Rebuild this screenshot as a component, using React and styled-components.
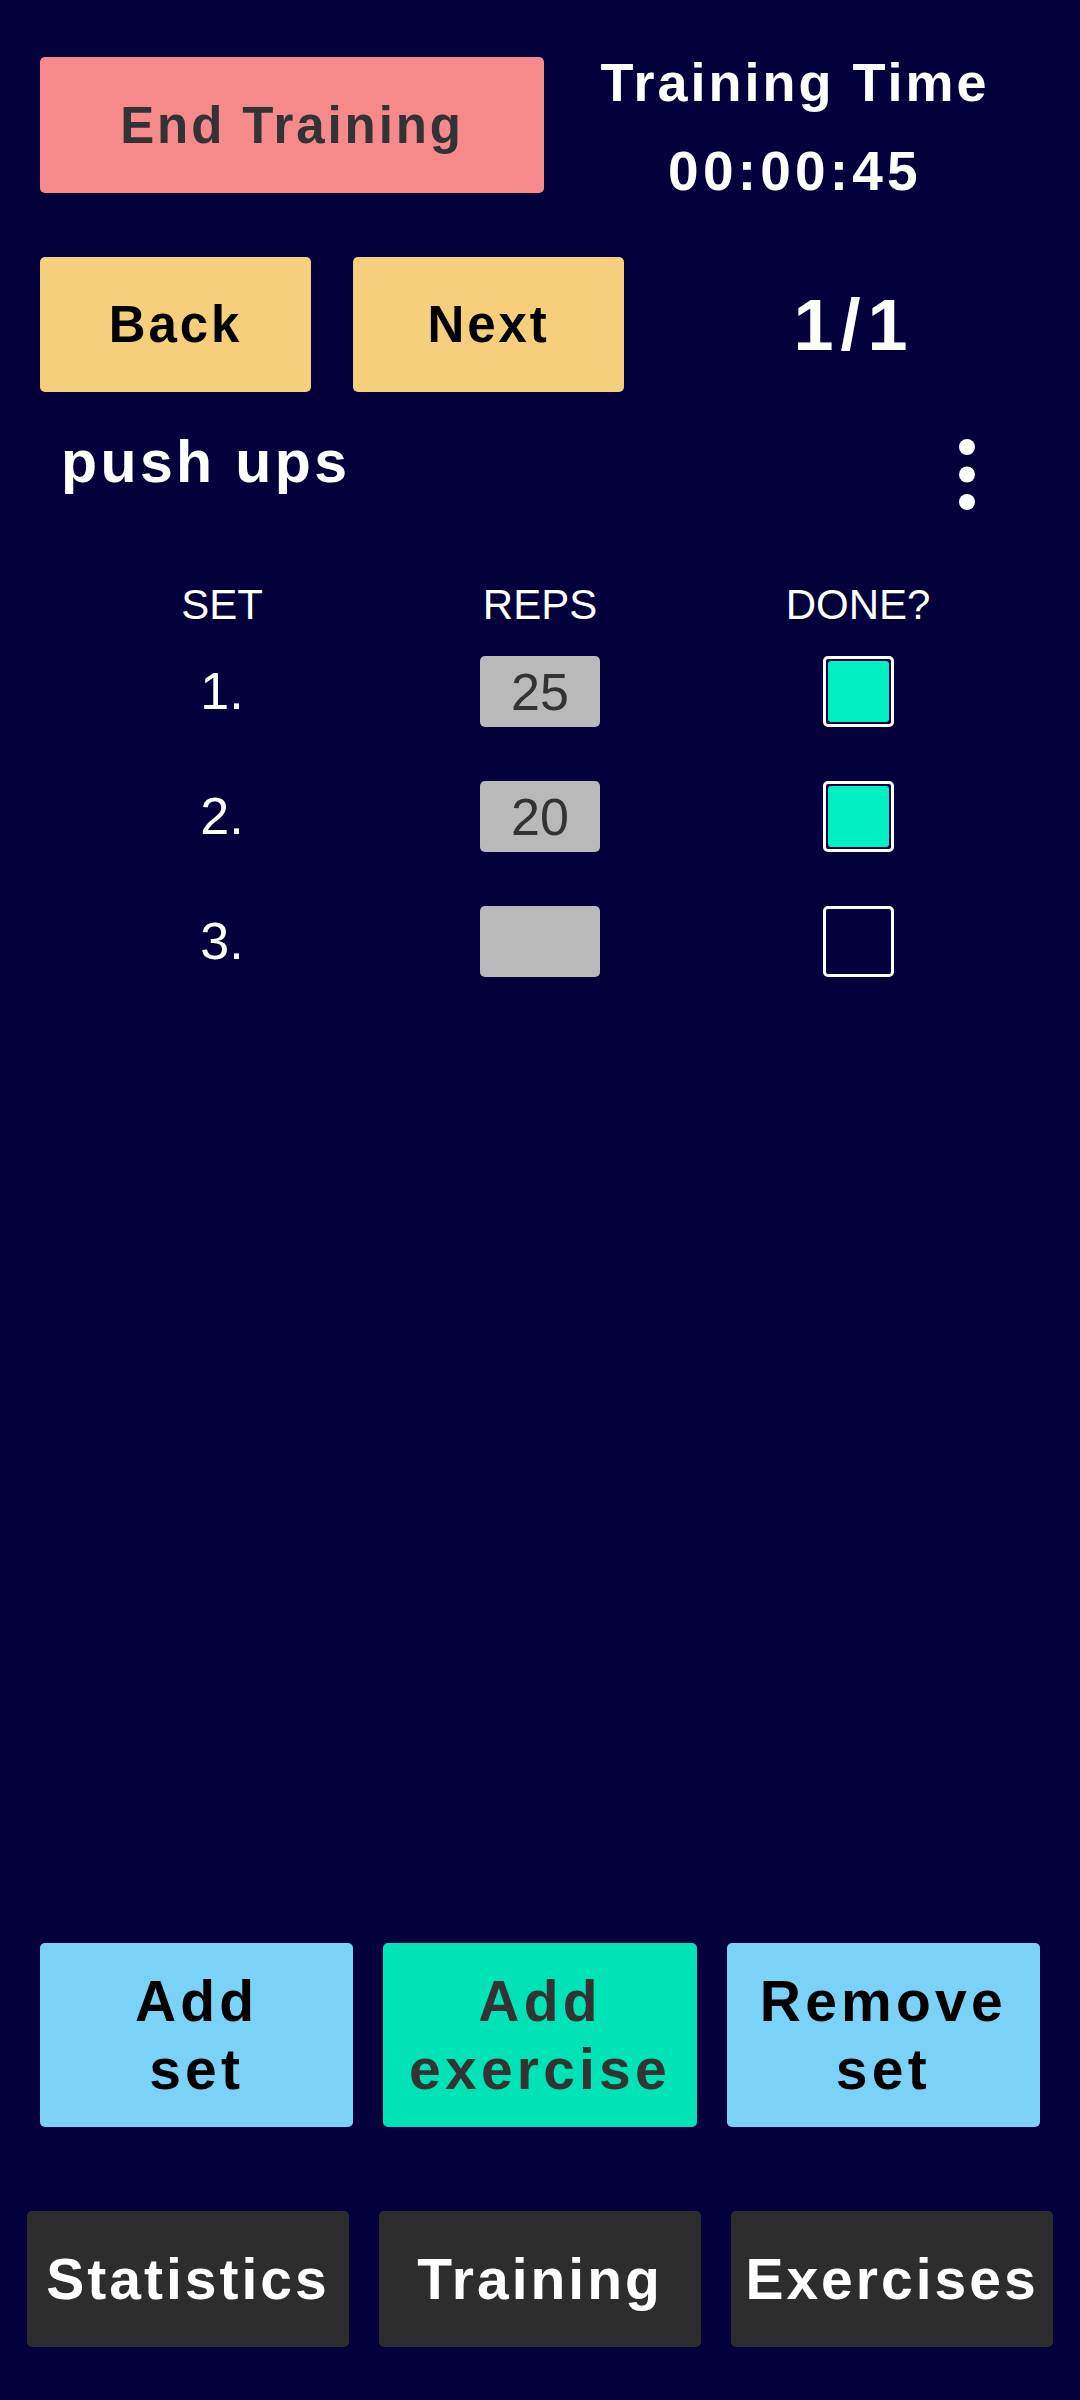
import React, { useState } from "react";
import styled, { createGlobalStyle } from "styled-components";

const GlobalStyle = createGlobalStyle`
	body {
		margin: 0;
		background-color: #03003b;
		font-family: "Liberation Sans", Arial, sans-serif;
	}
`;

const Page = styled.div`
	min-height: 100vh;
	display: flex;
	flex-direction: column;
	background-color: #03003b;
	color: #ffffff;
`;

const Button = styled.button`
	box-sizing: border-box;
	border: none;
	outline: none;
	border-radius: 5px;
	padding: 0;
	cursor: pointer;
	font-family: inherit;
	font-weight: bold;
	background-color: ${(p) => p.$bg};
	color: ${(p) => p.$color || "#000000"};
	font-size: ${(p) => p.$size || 51}px;
	letter-spacing: ${(p) => p.$spacing || 2.9}px;
	line-height: ${(p) => p.$lineHeight || "normal"};
`;

const TopRow = styled.div`
	display: flex;
	align-items: flex-start;
	height: 136px;
	padding: 57px 34px 0 40px;
`;

const EndButton = styled(Button)`
	width: 504px;
	height: 136px;
`;

const TimerBlock = styled.div`
	flex: 1;
	display: flex;
	flex-direction: column;
	align-items: center;
	gap: 27px;
	margin-top: -6px;
	font-weight: bold;
`;

const TimerTitle = styled.div`
	font-size: 54px;
	line-height: 62px;
	letter-spacing: 3px;
`;

const TimerValue = styled.div`
	font-size: 55px;
	line-height: 62px;
	letter-spacing: 4.2px;
`;

const PagerRow = styled.div`
	display: flex;
	align-items: center;
	gap: 42px;
	padding: 64px 38px 0 40px;
`;

const PagerButton = styled(Button)`
	width: 271px;
	height: 135px;
`;

const PageCount = styled.div`
	flex: 1;
	text-align: center;
	font-size: 72px;
	font-weight: bold;
	letter-spacing: 7px;
`;

const ExerciseRow = styled.div`
	display: flex;
	justify-content: space-between;
	align-items: flex-start;
	padding: 38px 105px 0 61px;
`;

const ExerciseName = styled.div`
	font-size: 59px;
	line-height: 64px;
	font-weight: bold;
	letter-spacing: 3.4px;
`;

const MenuDots = styled.svg`
	margin-top: 9px;
	display: block;
`;

const TableHead = styled.div`
	display: grid;
	grid-template-columns: repeat(3, 318px);
	margin: 71px 0 0 63px;
	font-size: 42px;
	line-height: 48px;
	text-align: center;
`;

const TableBody = styled.div`
	display: grid;
	grid-template-columns: repeat(3, 318px);
	grid-auto-rows: 71px;
	row-gap: 54px;
	align-items: center;
	justify-items: center;
	margin: 27px 0 0 63px;
`;

const SetNumber = styled.div`
	font-size: 52px;
	line-height: 71px;
`;

const RepsInput = styled.input`
	box-sizing: border-box;
	width: 120px;
	height: 71px;
	border: none;
	outline: none;
	border-radius: 5px;
	padding: 0;
	background-color: #b9b9b9;
	color: #333333;
	font-family: inherit;
	font-size: 52px;
	text-align: center;
`;

const CheckBox = styled.div`
	box-sizing: border-box;
	width: 71px;
	height: 71px;
	border: 3px solid #ffffff;
	border-radius: 5px;
	padding: 2px;
	cursor: pointer;
`;

const CheckFill = styled.div`
	width: 100%;
	height: 100%;
	border-radius: 3px;
	background-color: ${(p) => (p.$on ? "#00efc3" : "transparent")};
`;

const ActionRow = styled.div`
	margin-top: auto;
	display: flex;
	gap: 30px;
	padding: 0 40px;
`;

const ActionButton = styled(Button)`
	flex: 1;
	height: 184px;
`;

const BottomNav = styled.div`
	display: flex;
	gap: 30px;
	padding: 84px 27px 53px;
`;

const NavButton = styled(Button)`
	flex: 1;
	height: 136px;
`;

const App = () => {
	const [sets, setSets] = useState([
		{ reps: "25", done: true },
		{ reps: "20", done: true },
		{ reps: "", done: false },
	]);

	const toggle = (i) => {
		setSets(sets.map((s, idx) => (idx === i ? { ...s, done: !s.done } : s)));
	};

	const changeReps = (i, value) => {
		setSets(sets.map((s, idx) => (idx === i ? { ...s, reps: value } : s)));
	};

	return (
		<Page>
			<GlobalStyle />
			<TopRow>
				<EndButton $bg="#f68a8a" $color="#333333">
					End Training
				</EndButton>
				<TimerBlock>
					<TimerTitle>Training Time</TimerTitle>
					<TimerValue>00:00:45</TimerValue>
				</TimerBlock>
			</TopRow>

			<PagerRow>
				<PagerButton $bg="#f5cf7b">Back</PagerButton>
				<PagerButton $bg="#f5cf7b">Next</PagerButton>
				<PageCount>1/1</PageCount>
			</PagerRow>

			<ExerciseRow>
				<ExerciseName>push ups</ExerciseName>
				<MenuDots width="16" height="71" viewBox="0 0 16 71">
					<circle cx="8" cy="8" r="8" fill="#ffffff" />
					<circle cx="8" cy="35.5" r="8" fill="#ffffff" />
					<circle cx="8" cy="63" r="8" fill="#ffffff" />
				</MenuDots>
			</ExerciseRow>

			<TableHead>
				<div>SET</div>
				<div>REPS</div>
				<div>DONE?</div>
			</TableHead>
			<TableBody>
				{sets.map((s, i) => (
					<React.Fragment key={i}>
						<SetNumber>{i + 1}.</SetNumber>
						<RepsInput value={s.reps} onChange={(e) => changeReps(i, e.target.value)} />
						<CheckBox onClick={() => toggle(i)}>
							<CheckFill $on={s.done} />
						</CheckBox>
					</React.Fragment>
				))}
			</TableBody>

			<ActionRow>
				<ActionButton $bg="#7ad2f6" $size={57} $spacing={4.2} $lineHeight="68.5px">
					Add
					<br />
					set
				</ActionButton>
				<ActionButton $bg="#00e3b6" $color="#333333" $size={57} $spacing={4.2} $lineHeight="68.5px">
					Add
					<br />
					exercise
				</ActionButton>
				<ActionButton $bg="#7ad2f6" $size={57} $spacing={4.2} $lineHeight="68.5px">
					Remove
					<br />
					set
				</ActionButton>
			</ActionRow>

			<BottomNav>
				<NavButton $bg="#2d2d2d" $color="#ffffff" $size={57} $spacing={3}>
					Statistics
				</NavButton>
				<NavButton $bg="#2d2d2d" $color="#ffffff" $size={57} $spacing={3}>
					Training
				</NavButton>
				<NavButton $bg="#2d2d2d" $color="#ffffff" $size={57} $spacing={3}>
					Exercises
				</NavButton>
			</BottomNav>
		</Page>
	);
};

export default App;
